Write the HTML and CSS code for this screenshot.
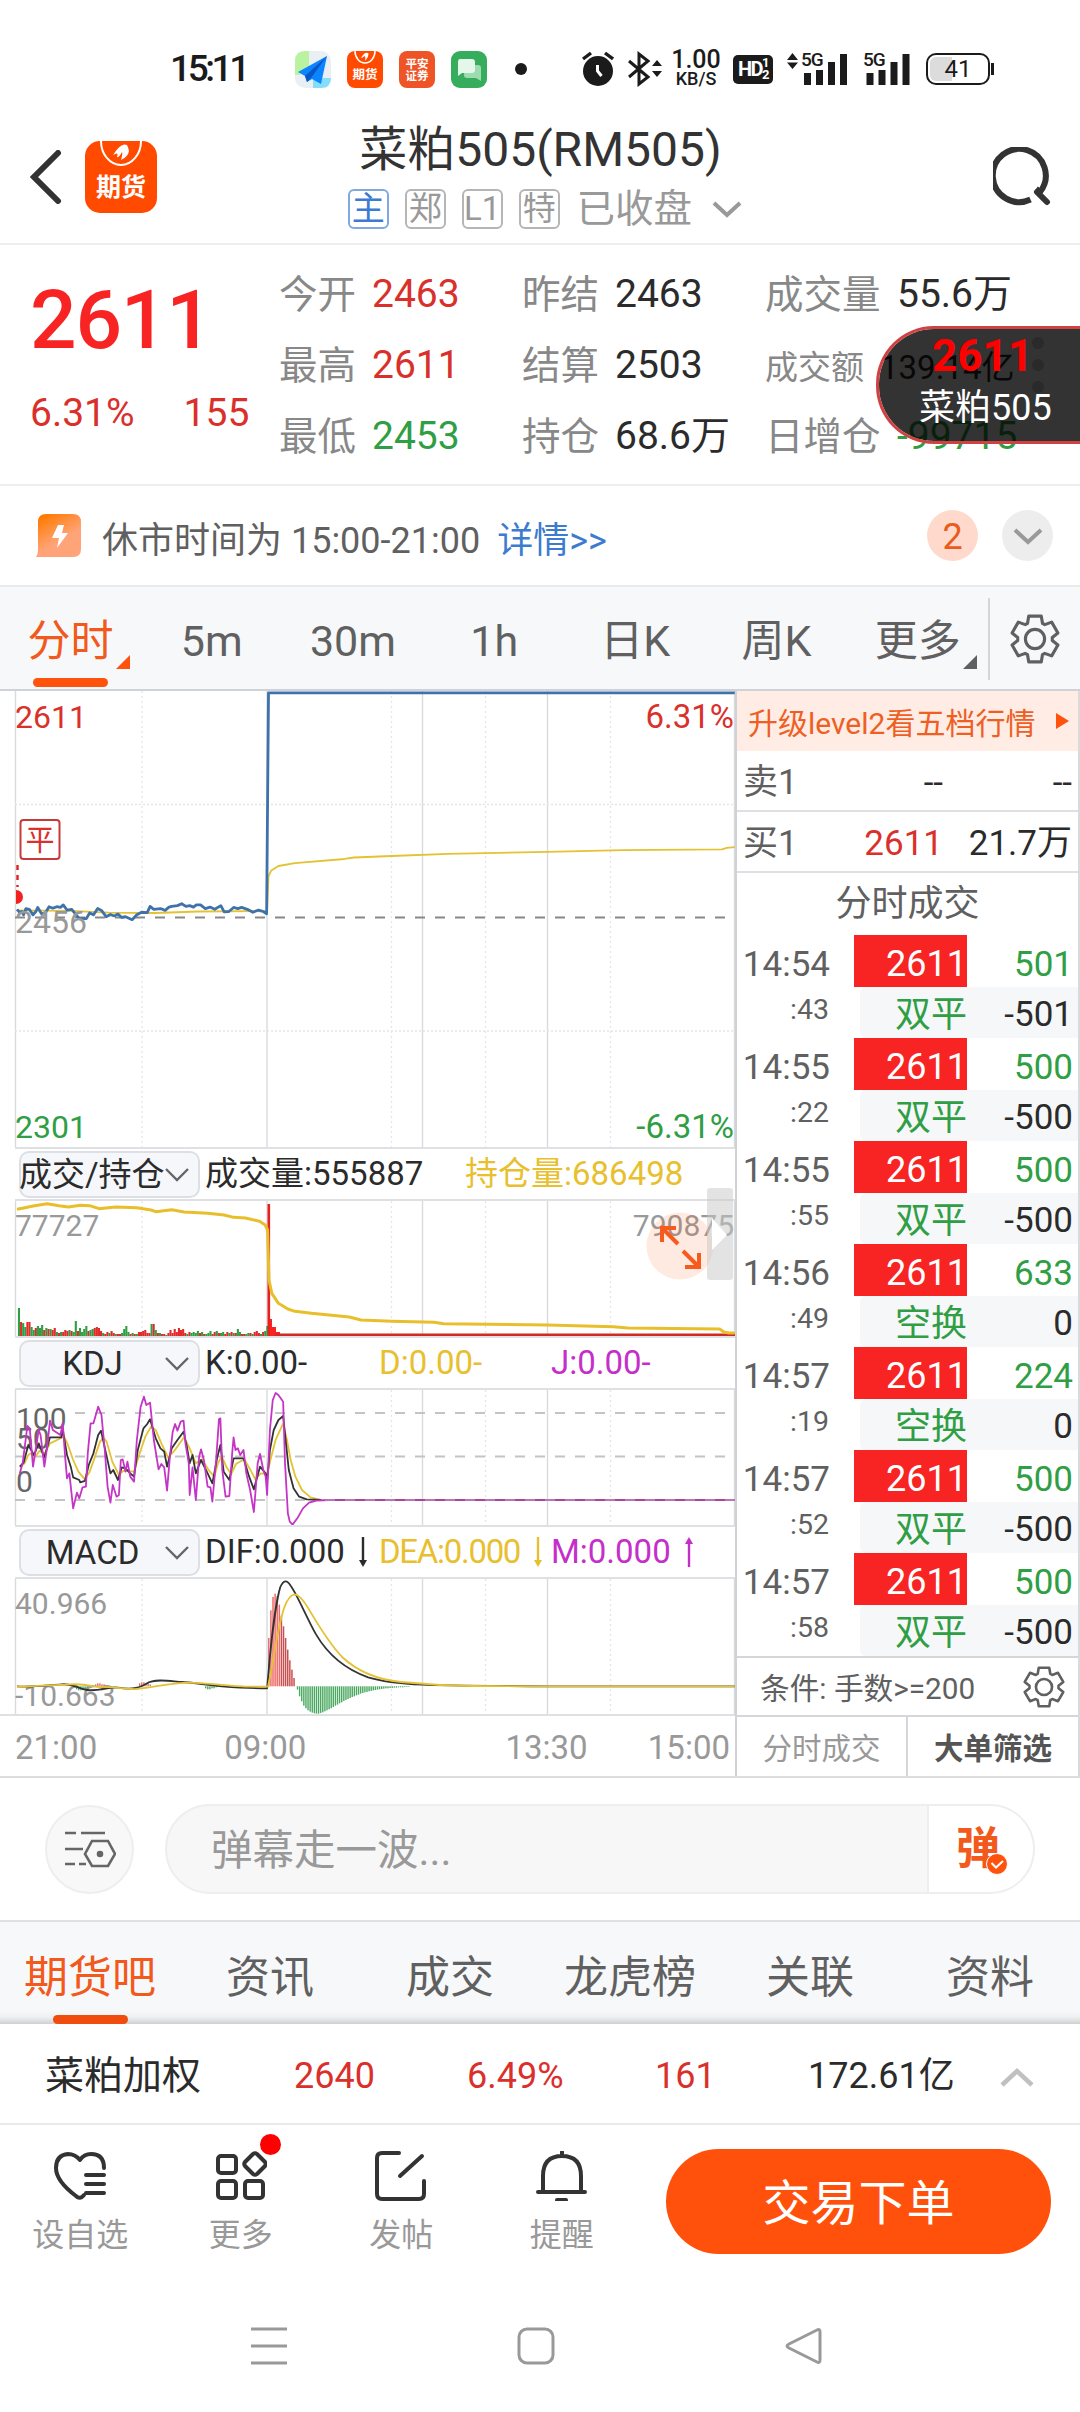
FILE: index.html
```html
<!DOCTYPE html>
<html lang="zh-CN">
<head>
    <meta charset="UTF-8">
    <meta name="viewport" content="width=device-width, initial-scale=1.0">
    <title>菜粕505(RM505)</title>
    <link rel="stylesheet" href="styles.css">
</head>
<body>

    <svg class="defs" width="0" height="0">
        <defs>
            <g id="rejilla">
                <path d="M15.5 0V456M267 0V456M422.5 0V456M547.5 0V456M734.5 0V456" stroke="#d9dadc" stroke-width="1.4"/>
                <path d="M142 0V456M391.5 0V456M485.5 0V456M610.5 0V456" stroke="#e4e5e8" stroke-width="1.3" stroke-dasharray="2 3"/>
            </g>
            <symbol id="gear" viewBox="-12 -12 24 24">
                <path d="M-3-11H3L3.6-7.5 4.7-6.9 8-8.1 11-2.9 8.3-.7V.7L11 2.9 8 8.1 4.7 6.9 3.6 7.5 3 11H-3L-3.6 7.5-4.7 6.9-8 8.1-11 2.9-8.3.7V-.7L-11-2.9-8-8.1-4.7-6.9-3.6-7.5Z" fill="none" stroke="currentColor" stroke-width="1.5" stroke-linejoin="round"/>
                <circle r="4.6" fill="none" stroke="currentColor" stroke-width="1.5"/>
            </symbol>
            <symbol id="chev" viewBox="0 0 30 18">
                <path d="M2 3L15 15 28 3" fill="none" stroke="currentColor" stroke-width="4"/>
            </symbol>
            <symbol id="down" viewBox="0 0 8 30">
                <path d="M4 0V28" stroke="currentColor" stroke-width="2.4"/>
                <path d="M0 23H8L4 30Z" fill="currentColor"/>
            </symbol>
        </defs>
    </svg>

    <!-- Status bar -->
    <div class="status">
        <span class="clock">15:11</span>
        <div class="apps">
            <svg width="36" height="37" viewBox="0 0 36 37"><rect width="36" height="37" rx="10" fill="#e9eff3"/><path d="M0 24V10Q0 0 10 0H14V18L4 24Z" fill="#b9f2a0"/><path d="M18 27H36Q36 37 26 37H18Z" fill="#86dcfb"/><path d="M32 5L3 21 10 25 12 31 17 28 26 33Z" fill="#0a84ff"/><path d="M32 5L10 25 12 31 16 27Z" fill="#0757c4"/></svg>
            <div class="app app-qh"><svg class="arc" viewBox="0 0 72 73"><path d="M16 0A20 24 0 0 0 56 0" fill="none" stroke="#fff" stroke-width="3"/><path d="M28 14Q36 0 43 5Q43 12 36 20Q38 12 35 10Q31 14 28 14Z" fill="#fff"/></svg><b>期货</b></div>
            <div class="app app-pa"><b>平安</b><b>证券</b></div>
            <svg width="36" height="37" viewBox="0 0 36 37"><rect width="36" height="37" rx="9" fill="#35ad5c"/><path d="M14 14H27Q30 14 30 17V30L25 27H16Q13 27 13 24Z" fill="#9ddcb0"/><path d="M9 8H21Q24 8 24 11V19Q24 22 21 22H11L7 25V11Q7 8 9 8Z" fill="#e4f7ea"/></svg>
            <i class="dot"></i>
        </div>
        <div class="sys">
            <svg width="32" height="36" viewBox="0 0 32 36"><circle cx="16" cy="20" r="15" fill="#1b1b1b"/><path d="M1 8L9 2M31 8L23 2" stroke="#1b1b1b" stroke-width="3.4"/><path d="M15.500 14V20L19.500 25" fill="none" stroke="#fff" stroke-width="3"/></svg>
            <svg class="bt" width="34" height="36" viewBox="0 0 34 36"><path d="M1 10L20 26 11 33V3L20 10 1 26" fill="none" stroke="#1b1b1b" stroke-width="3"/><path d="M24 15L29 9 34 15ZM24 20L29 26 34 20Z" fill="#1b1b1b"/></svg>
            <div class="speed"><b>1.00</b><span>KB/S</span></div>
            <div class="hd"><b>HD</b><span><b>1</b><b>2</b></span></div>
            <div class="signal">
                <svg width="60" height="34" viewBox="0 0 60 34"><path d="M0 8L5.500 1 11 8ZM0 10.500L5.500 17 11 10.500Z" fill="#1b1b1b"/><path d="M20.500 21V33M32.500 18V33M44.500 10V33M56.500 2V33" stroke="#1b1b1b" stroke-width="7"/></svg>
                <b>5G</b>
            </div>
            <div class="signal second">
                <svg width="47" height="34" viewBox="0 0 47 34"><path d="M7 21V33M19 18V33M31 10V33M43 2V33" stroke="#1b1b1b" stroke-width="7"/></svg>
                <b>5G</b>
            </div>
            <div class="battery"><span>41</span></div>
            <i class="knob"></i>
        </div>
    </div>

    <!-- Header -->
    <header class="header">
        <div class="left">
            <svg width="32" height="54" viewBox="0 0 32 54"><path d="M28 3L4 27 28 51" fill="none" stroke="#333" stroke-width="6" stroke-linecap="round"/></svg>
            <div class="logo"><svg class="arc" viewBox="0 0 72 73"><path d="M16 0A20 24 0 0 0 56 0" fill="none" stroke="#fff" stroke-width="2"/><path d="M28 14Q36 1 42 4Q43 6 44 10Q43 16 36 19Q38 12 37 11Q34 17 32 16Q34 10 28 14Z" fill="#fff"/></svg><b>期货</b></div>
        </div>
        <div class="title">
            <h1>菜粕505(RM505)</h1>
            <div class="tags">
                <span class="tag blue">主</span><span class="tag">郑</span><span class="tag">L1</span><span class="tag">特</span>
                <span class="closed">已收盘</span>
                <svg width="30" height="18"><use href="#chev"/></svg>
            </div>
        </div>
        <svg class="search" width="58" height="60" viewBox="0 0 58 60"><path d="M37.500 52.500A26.500 26.500 0 1 1 47 45L43 42" fill="none" stroke="#333" stroke-width="6" stroke-linecap="butt"/><path d="M44 45L54 55" stroke="#333" stroke-width="6" stroke-linecap="round"/></svg>
    </header>

    <!-- Quote summary -->
    <section class="quote">
        <div class="price">
            <div class="last">2611</div>
            <div class="change"><span>6.31%</span><span>155</span></div>
        </div>
        <div class="stats">
            <div><label>今开</label><span class="red">2463</span></div>
            <div><label>昨结</label><span>2463</span></div>
            <div class="wide"><label>成交量</label><span>55.6万</span></div>
            <div><label>最高</label><span class="red">2611</span></div>
            <div><label>结算</label><span>2503</span></div>
            <div class="wide small"><label>成交额</label><span>139.14亿</span></div>
            <div><label>最低</label><span class="green">2453</span></div>
            <div><label>持仓</label><span>68.6万</span></div>
            <div class="wide"><label>日增仓</label><span class="green">-99715</span></div>
        </div>
        <div class="floating">
            <b>2611</b>
            <span>菜粕505</span>
            <svg width="14" height="60" viewBox="0 0 14 60"><circle cx="7" cy="8" r="6"/><circle cx="7" cy="30" r="6"/><circle cx="7" cy="52" r="6"/></svg>
        </div>
    </section>

    <!-- Notice -->
    <div class="notice">
        <svg width="46" height="44" viewBox="0 0 46 44"><defs><linearGradient id="g1" x1="0" y1="0" x2=".6" y2="1"><stop offset=".1" stop-color="#ff7a00"/><stop offset=".7" stop-color="#ffa478"/></linearGradient></defs><path d="M2 8Q2 0 10 0H37Q45 0 45 8V35Q45 43 37 43H0Q2 40 2 36Z" fill="url(#g1)"/><path d="M22 11H28L26 19H32L21 34 23 24H16Z" fill="#fff"/></svg>
        <span>休市时间为 15:00-21:00</span>
        <a>详情&gt;&gt;</a>
        <i class="count">2</i>
        <i class="fold"><svg width="30" height="18"><use href="#chev"/></svg></i>
    </div>

    <!-- Period tabs -->
    <nav class="periods">
        <div class="on"><span>分时</span><svg class="corner" width="14" height="14"><path d="M14 0V14H0Z"/></svg></div>
        <div><span>5m</span></div>
        <div><span>30m</span></div>
        <div><span>1h</span></div>
        <div><span>日K</span></div>
        <div><span>周K</span></div>
        <div><span>更多</span><svg class="corner" width="14" height="14"><path d="M14 0V14H0Z"/></svg></div>
        <div class="set"><svg width="50" height="50"><use href="#gear"/></svg></div>
    </nav>

    <main class="market">
        <div class="charts">
            <!-- Price -->
            <svg class="plot" width="735" height="456" viewBox="0 0 735 456">
                <use href="#rejilla"/>
                <path d="M15 113.500H735M15 340H735" stroke="#e4e5e8" stroke-width="1.3" stroke-dasharray="2 2"/>
                <path d="M15 226.500H735" stroke="#888" stroke-width="2" stroke-dasharray="10 10"/>
                <g transform="scale(.4719 .37) translate(0 -300)" fill="none">
                    <path class="ln yellow" d="M36 893L150 894 230 899 330 900 420 896 540 895 566 896 569 800 575 785 590 773 625 765 730 754 750 750 830 746 950 740 1160 735 1320 730 1530 728 1540 724 1557 722"/>
                    <path class="ln blue" d="M36 890L42 899 46 896 50 905 55 888 62 890 70 905 76 896 80 885 88 902 96 900 104 883 112 887 120 883 128 885 134 878 142 892 152 890 160 903 168 915 183 915 190 900 198 905 207 888 215 893 225 910 234 904 242 908 250 903 258 912 266 910 280 918 290 905 300 898 312 899 318 882 326 890 340 888 350 893 358 884 364 882 376 880 385 875 394 882 402 880 410 884 416 878 425 878 435 888 445 884 455 890 468 880 475 897 485 896 495 885 504 888 512 885 524 890 536 898 548 892 558 896 565 902 569 305H1557"/>
                </g>
                <path d="M17.500 174V196" stroke="#d22" stroke-width="2.400" stroke-dasharray="5 5"/>
                <path d="M15 199A7 7 0 0 1 15 213Z" transform="translate(1 0)" fill="#f22222"/>
                <rect x="20.500" y="129" width="39" height="39" rx="3" fill="#fff" stroke="#c73a3a" stroke-width="2"/>
                <text x="40" y="159.500" font-size="29" text-anchor="middle" class="c-red">平</text>
                <text x="15" y="37" class="c-red">2611</text>
                <text x="734" y="37" font-size="33" text-anchor="end" class="c-red">6.31%</text>
                <text x="15" y="241.500" class="c-gray">2456</text>
                <text x="15" y="447" class="c-green">2301</text>
                <text x="734" y="447" font-size="33" text-anchor="end" class="c-green">-6.31%</text>
            </svg>

            <!-- Volume / open interest -->
            <div class="bar">
                <div class="pick full">成交/持仓<svg width="24" height="14" viewBox="0 0 24 14"><path d="M1 1L12 12 23 1"/></svg></div>
                <span class="v2">成交量:555887</span><span class="c2">持仓量:686498</span>
            </div>
            <div class="plot-wrap">
                <svg class="plot" width="735" height="135" viewBox="0 0 735 135">
                    <use href="#rejilla"/>
                    <text x="15" y="35" font-size="30" class="c-gray">77727</text>
                    <text x="734" y="35" font-size="30" text-anchor="end" class="c-gray">790875</text>
                    <g id="volumen"></g>
                    <path d="M275 134H735" stroke="#cf2b22" stroke-width="3"/>
                    <g transform="scale(.4719 .3333) translate(0 -213)" fill="none">
                        <path class="ln yellow3" d="M36 238L50 234 70 228 100 221 125 227 145 231 170 226 190 227 210 236 245 231 290 233 320 240 330 245 364 239 390 246 440 250 475 255 495 262 520 264 550 274 562 285 567 300 570 450 576 490 590 520 610 537 625 544 660 550 740 561 765 570 830 574 920 577 940 581 1160 585 1300 590 1330 594 1525 597 1534 606 1545 609 1557 609"/>
                    </g>
                    <circle cx="680" cy="45" r="33.500" fill="rgba(255,90,20,.13)"/>
                    <path d="M662 41V27H676M662 27L678 43M683 50L699 66M699 52V66H685" fill="none" stroke="#f75a1c" stroke-width="4"/>
                </svg>
                <svg class="handle" width="26" height="92"><path d="M5 30L20 47 5 62Z" fill="#fff"/></svg>
            </div>

            <!-- KDJ -->
            <div class="bar">
                <div class="pick mid">KDJ<svg width="24" height="14" viewBox="0 0 24 14"><path d="M1 1L12 12 23 1"/></svg></div>
                <span>K:0.00-</span><span class="c2">D:0.00-</span><span class="c3">J:0.00-</span>
            </div>
            <svg class="plot" width="735" height="135" viewBox="0 0 735 135">
                <use href="#rejilla"/>
                <path d="M75 23H735M15 66.500H735M15 110H735" stroke="#c4c4c4" stroke-width="1.800" stroke-dasharray="10 10"/>
                <text x="16" y="39" font-size="30" class="c-dark">100</text>
                <text x="16" y="59" font-size="30" class="c-dark">50</text>
                <text x="16" y="102" font-size="30" class="c-dark">0</text>
                <g transform="scale(.4719 .3333) translate(0 -30)" fill="none">
                    <path class="ln yellow" d="M42 262L52 250 60 225 66 220 74 232 84 212 94 222 106 190 130 174 136 170 144 195 155 240 166 275 180 298 190 275 200 235 212 185 219 173 226 185 238 245 252 285 262 272 284 275 296 220 308 170 320 140 330 150 342 190 356 232 368 215 390 172 402 205 415 250 428 238 442 270 454 290 462 250 470 228 480 262 490 282 500 252 518 238 530 268 541 297 553 280 566 282 574 235 584 180 600 130 608 180 616 240 626 290 640 330 658 352 680 360"/>
                    <path class="ln black" d="M42 260L50 248 60 195 72 225 82 190 94 232 106 172 130 172 133 150 142 225 150 260 155 292 168 300 170 307 180 303 188 255 198 220 208 165 214 152 220 190 234 280 240 270 250 300 258 262 266 265 276 280 284 290 292 210 304 145 312 132 318 118 330 175 340 205 348 215 354 260 364 205 376 180 389 155 396 200 402 250 408 225 415 280 426 240 440 280 450 310 460 235 467 195 474 275 486 300 495 235 516 235 528 290 538 328 551 260 563 280 566 305 572 210 580 150 590 120 600 108 606 190 612 270 622 325 634 350 650 358 680 360"/>
                    <path class="ln purple" d="M42 280L48 250 58 138 63 145 70 260 82 150 86 165 94 260 100 200 106 122 112 150 128 165 133 130 138 230 142 295 147 280 155 385 163 338 168 355 175 322 182 320 186 220 192 130 198 130 208 80 215 105 222 210 228 320 234 368 239 315 247 350 252 345 256 240 260 238 266 275 270 245 276 290 284 305 290 180 298 80 305 50 310 75 318 68 326 180 336 268 342 252 348 262 354 332 360 230 366 155 371 132 376 152 383 125 389 122 393 190 400 250 402 345 408 262 415 360 422 230 426 208 432 240 440 320 446 322 450 365 458 240 464 118 467 115 471 270 478 350 486 348 492 220 495 172 499 210 504 205 509 225 516 210 522 280 530 330 538 396 546 250 551 222 558 270 563 290 566 345 572 150 578 60 584 39 590 45 600 65 604 250 610 400 614 425 620 434 630 415 642 385 655 368 670 362 700 360"/>
                </g>
                <path d="M325 110H735" stroke="#b878b4" stroke-width="2"/>
                <path d="M335 110H735" stroke="#a8469f" stroke-width="2" stroke-dasharray="10 10"/>
            </svg>

            <!-- MACD -->
            <div class="bar">
                <div class="pick mid">MACD<svg width="24" height="14" viewBox="0 0 24 14"><path d="M1 1L12 12 23 1"/></svg></div>
                <span>DIF:0.000<svg width="8" height="30"><use href="#down"/></svg></span><span class="c2 tight">DEA:0.000<svg width="8" height="30"><use href="#down"/></svg></span><span class="c3">M:0.000<svg class="up" width="8" height="30"><use href="#down"/></svg></span>
            </div>
            <svg class="plot" width="735" height="135" viewBox="0 0 735 135">
                <use href="#rejilla"/>
                <text x="15" y="35" font-size="30" class="c-gray">40.966</text>
                <text x="15" y="126.500" font-size="30" class="c-gray">-10.663</text>
                <g id="macd"></g>
                <g transform="scale(.4719 .3333) translate(0 -598)" fill="none">
                    <path class="ln black" d="M36 920C60 924 100 917 130 914S160 926 185 931S230 920 250 924S290 930 310 912S370 907 385 907S450 918 470 920S540 926 566 926L572 830C578 740 588 650 594 622Q604 590 616 618C630 645 650 715 670 765C695 825 730 868 780 893C810 906 850 912 895 915S1000 918 1160 920H1557"/>
                    <path class="ln yellow" d="M36 922C60 920 110 916 150 914S200 924 215 922S270 930 290 928S370 909 400 909S500 921 520 921H568L574 880C582 810 594 720 602 685Q612 646 624 644Q636 644 655 690C680 750 700 795 725 832C755 872 800 900 850 907S950 918 1000 919S1100 920 1160 920H1557"/>
                </g>
            </svg>
            <div class="axis"><span>21:00</span><span>09:00</span><span>13:30</span><span>15:00</span></div>
        </div>

        <!-- Order book -->
        <aside class="book">
            <div class="upgrade"><span>升级level2看五档行情</span><svg width="13" height="16"><path d="M0 0L13 8 0 16Z" fill="#ff520d"/></svg></div>
            <div class="level"><label>卖1</label><span>--</span><span>--</span></div>
            <div class="level"><label>买1</label><span class="red">2611</span><span>21.7万</span></div>
            <div class="book-title">分时成交</div>
            <div class="ticks" id="ticks"></div>
            <div class="cond"><span>条件: 手数&gt;=200</span><svg width="42" height="42"><use href="#gear"/></svg></div>
            <div class="book-tabs"><span>分时成交</span><b>大单筛选</b></div>
        </aside>
    </main>

    <!-- Bullet comments -->
    <div class="danmu">
        <div class="danmu-set"><svg width="52" height="38" viewBox="0 0 52 38" fill="none" stroke="#666" stroke-width="2.600"><path d="M1 3H12M17 3H41M1 19H19M1 34H11M15 34H22"/><path d="M28 11H44L51 24 44 36H28L21 24Z"/><circle cx="36" cy="24" r="2" fill="#666"/></svg></div>
        <div class="danmu-input">
            <span>弹幕走一波...</span>
            <div class="danmu-on"><b>弹</b><svg width="22" height="22" viewBox="0 0 22 22"><circle cx="11" cy="11" r="10.500" fill="#ff520d" stroke="#fff"/><path d="M5.500 10L10 14.500 17 8" fill="none" stroke="#fff" stroke-width="2"/></svg></div>
        </div>
    </div>

    <nav class="sections">
        <div class="on">期货吧</div><div>资讯</div><div>成交</div><div>龙虎榜</div><div>关联</div><div>资料</div>
    </nav>

    <div class="index-row">
        <span class="name">菜粕加权</span>
        <span class="red">2640</span>
        <span class="red">6.49%</span>
        <span class="red">161</span>
        <span>172.61亿</span>
        <svg width="34" height="20" viewBox="0 0 34 20"><path d="M2 18L17 4 32 18" fill="none" stroke="#c0c0c0" stroke-width="4.500"/></svg>
    </div>

    <footer class="actions">
        <div class="action"><svg width="52" height="50" viewBox="0 0 52 50"><path d="M50 17Q50 3 37 3Q30 3 26 9Q21 3 14 3Q2 4 2 17Q2 30 22 45Q26 49 30 44" /><path d="M32 24H50M32 33H50M32 42H50"/></svg>设自选</div>
        <div class="action"><svg width="52" height="50" viewBox="0 0 52 50"><rect x="3" y="5" width="18" height="17" rx="3"/><rect x="3" y="30" width="18" height="17" rx="3"/><rect x="30" y="30" width="18" height="17" rx="3"/><path d="M38 3Q40 1.500 42 3L50 11Q51.500 13 50 15L42 23Q40 24.500 38 23L30 15Q28.500 13 30 11Z"/></svg><i class="red-dot"></i>更多</div>
        <div class="action"><svg width="52" height="50" viewBox="0 0 52 50"><path d="M24 2H7Q2 2 2 7V43Q2 48 7 48H44Q49 48 49 43V30M25 25L47 5"/></svg>发帖</div>
        <div class="action"><svg width="52" height="50" viewBox="0 0 52 50"><path d="M7 41V25Q7 5 26 5Q45 5 45 25V41M2 41H49M26 5V1M21 49H30"/></svg>提醒</div>
        <button class="order">交易下单</button>
    </footer>

    <div class="sysnav">
        <svg width="36" height="38" viewBox="0 0 36 38"><path d="M0 2H36M0 19H36M0 36H36"/></svg>
        <svg width="38" height="38" viewBox="0 0 38 38"><rect x="2" y="2" width="34" height="34" rx="8"/></svg>
        <svg width="38" height="38" viewBox="0 0 38 38"><path d="M32 3Q35 1.500 35 5V33Q35 36.500 32 35L4 21Q0 19 4 17Z"/></svg>
    </div>

    <script src="charts.js"></script>
</body>
</html>
```

FILE: styles.css
```css
* {
    box-sizing: border-box;
}
body {
    margin: 0;
    width: 1080px;
    height: 2412px;
    overflow: hidden;
    background: #fff;
    color: #2b2b2b;
    font-family: Roboto, "Noto Sans CJK SC", sans-serif;
}
svg {
    display: block;
    flex: none;
}
i {
    font-style: normal;
}
.defs {
    position: absolute;
}
.red { color: #d9302c; }
.green { color: #2f9e44; }

/* Status bar */
.status {
    display: flex;
    align-items: flex-start;
    height: 100px;
    padding: 39px 0 0 170px;
    color: #1b1b1b;
}
.clock {
    width: 125px;
    font-size: 37px;
    font-weight: 500;
    line-height: 60px;
    letter-spacing: -3.4px;
}
.apps {
    display: flex;
    align-items: center;
    gap: 16px;
    width: 287px;
    height: 60px;
}
.app {
    position: relative;
    width: 36px;
    height: 37px;
    border-radius: 8px;
    color: #fff;
    text-align: center;
    overflow: hidden;
}
.arc {
    position: absolute;
    left: 0;
    top: 0;
    width: 100%;
}
.app-qh {
    background: #ff4a00;
}
.app-qh b {
    display: block;
    padding-top: 16px;
    font-size: 12.5px;
    line-height: 16px;
}
.app-pa {
    background: #ee5426;
    padding-top: 7px;
}
.app-pa b {
    display: block;
    font-size: 11.5px;
    line-height: 12px;
}
.dot {
    width: 12px;
    height: 12px;
    margin-left: 12px;
    border-radius: 50%;
    background: #1b1b1b;
}
.sys {
    display: flex;
    align-items: center;
    height: 60px;
}
.bt {
    margin-left: 14px;
}
.speed {
    width: 50px;
    margin-left: 9px;
    text-align: center;
}
.speed b {
    display: block;
    font-size: 25px;
    font-weight: 500;
    line-height: 20px;
}
.speed span {
    display: block;
    font-size: 18px;
    font-weight: 500;
    line-height: 18px;
}
.hd {
    display: flex;
    align-items: center;
    justify-content: center;
    width: 40px;
    height: 29px;
    margin-left: 12px;
    border-radius: 5px;
    background: #1b1b1b;
    color: #fff;
    font-size: 20px;
    letter-spacing: -1.5px;
}
.hd span b {
    display: block;
    font-size: 13px;
    line-height: 12px;
}
.signal {
    position: relative;
    margin-left: 14px;
}
.signal b {
    position: absolute;
    left: 14px;
    top: -2px;
    font-size: 19px;
    font-weight: 500;
    line-height: 20px;
    letter-spacing: -1px;
    background: #fff;
    height: 17px;
}
.signal.second {
    margin-left: 16px;
}
.signal.second b {
    left: 0;
}
.battery {
    width: 64px;
    height: 32px;
    margin-left: 16px;
    border: 2.5px solid #1b1b1b;
    border-radius: 10px;
    background: linear-gradient(90deg, #dcdcdc 24px, #fff 24px);
    background-clip: content-box;
    padding: 2px;
    font-size: 24px;
    line-height: 24px;
    text-align: center;
}
.knob {
    width: 3px;
    height: 12px;
    margin-left: 1px;
    background: #1b1b1b;
}

/* Header */
.header {
    display: flex;
    justify-content: space-between;
    height: 145px;
    padding: 22px 29px 0 30px;
    border-bottom: 2px solid #eee;
}
.left {
    display: flex;
    align-items: center;
    gap: 23px;
    width: 130px;
    height: 110px;
}
.logo {
    position: relative;
    width: 72px;
    height: 72px;
    border-radius: 15px;
    background: #ff4a00;
    color: #fff;
    text-align: center;
}
.logo b {
    display: block;
    padding-top: 32px;
    font-size: 25px;
    line-height: 30px;
}
.title {
    width: 440px;
}
h1 {
    margin: 0 0 11px;
    color: #333;
    font-size: 48px;
    font-weight: 400;
    line-height: 56px;
    text-align: center;
    white-space: nowrap;
}
.tags {
    display: flex;
    align-items: center;
    gap: 15.500px;
    height: 40px;
    padding-left: 27px;
    color: #999;
}
.tag {
    width: 41.500px;
    height: 40px;
    border: 2px solid #b5b5b5;
    border-radius: 6px;
    font-size: 33px;
    line-height: 36px;
    text-align: center;
}
.tag.blue {
    border-color: #7fa9e0;
    color: #3c7bd0;
}
.closed {
    margin-left: 1px;
    font-size: 38.500px;
    line-height: 40px;
}
.tags svg {
    margin-left: 4px;
}
.search {
    margin-top: 25px;
    margin-left: 72px;
}

/* Quote */
.quote {
    position: relative;
    display: flex;
    height: 241px;
    padding-top: 14px;
    border-bottom: 2px solid #eee;
}
.price {
    width: 279px;
    padding: 19px 0 0 30px;
}
.last {
    color: #f82424;
    font-size: 82px;
    font-weight: 500;
    line-height: 84px;
    letter-spacing: -1.2px;
}
.change {
    display: flex;
    gap: 49px;
    margin-top: 29px;
    color: #d9302c;
    font-size: 39px;
    line-height: 44px;
}
.stats {
    display: grid;
    grid-template-columns: 243px 243px 1fr;
    grid-auto-rows: 71px;
    flex: 1;
    font-size: 39px;
    line-height: 71px;
    white-space: nowrap;
}
.stats > div {
    display: flex;
}
.stats label {
    width: 93px;
    color: #888;
    font-size: 38.500px;
}
.stats .wide label {
    width: 132px;
}
.stats .small {
    font-size: 33px;
    padding-top: 2px;
}
.stats .small label {
    width: 115px;
    font-size: 33px;
}
.floating {
    position: absolute;
    right: 0;
    top: 81px;
    width: 204px;
    height: 118px;
    border: 3px solid #d04242;
    border-right: 0;
    border-radius: 58px 0 0 58px;
    background: rgba(0, 0, 0, .8);
    background-clip: padding-box;
    color: #fff;
}
.floating b {
    position: relative;
    z-index: 1;
    display: block;
    padding-left: 53px;
    color: #f00;
    font-size: 44px;
    line-height: 54px;
}
.floating span {
    display: block;
    padding-left: 40px;
    font-size: 36px;
    line-height: 50px;
}
.floating svg {
    position: absolute;
    left: 152px;
    top: 6px;
    fill: #2a2a2a;
}

/* Notice */
.notice {
    display: flex;
    align-items: center;
    height: 101px;
    padding: 0 27px 0 36px;
    border-bottom: 2px solid #e8eaec;
    color: #606060;
    font-size: 36px;
}
.notice span {
    margin-left: 20px;
    padding-top: 3px;
}
.notice a {
    margin-left: 17px;
    padding-top: 3px;
    color: #3c7bd0;
}
.notice i {
    display: flex;
    align-items: center;
    justify-content: center;
    width: 51px;
    height: 51px;
    border-radius: 50%;
}
.notice .count {
    margin-left: auto;
    padding-top: 2px;
    background: #ffdacc;
    color: #e85c20;
}
.notice .fold {
    margin-left: 24px;
    background: #ededed;
    color: #999;
}

/* Period tabs */
.periods {
    display: flex;
    height: 104px;
    border-bottom: 2px solid #cfd3d8;
    background: #f7f8fa;
    color: #606060;
    font-size: 43px;
    line-height: 108px;
}
.periods > div {
    position: relative;
    width: 141.200px;
    text-align: center;
}
.periods > .set {
    display: flex;
    align-items: center;
    justify-content: center;
    flex: 1;
    height: 82px;
    margin-top: 11px;
    border-left: 2px solid #d4d6d9;
}
.corner {
    position: absolute;
    right: 11px;
    top: 68px;
    fill: #606060;
}
.periods .on {
    color: #f2591c;
}
.periods .on .corner {
    fill: #ff520d;
}
.periods .on::after {
    content: "";
    position: absolute;
    left: 33px;
    top: 91px;
    width: 75px;
    height: 9px;
    border-radius: 5px;
    background: #ff520d;
}

/* Charts */
.market {
    display: flex;
    height: 1087px;
    border-bottom: 2px solid #ddd;
}
.charts {
    width: 735px;
}
.plot {
    overflow: hidden;
    font-size: 32px;
}
.plot-wrap {
    position: relative;
}
.handle {
    position: absolute;
    left: 707px;
    top: -13px;
    border-radius: 3px;
    background: rgba(200, 200, 200, .5);
}
.ln {
    stroke-width: 1.8;
    stroke-linejoin: round;
    vector-effect: non-scaling-stroke;
}
.yellow { stroke: #e3c234; }
.yellow3 { stroke: #e8bf2b; stroke-width: 3; }
.blue { stroke: #3f72ab; stroke-width: 2.8; }
.black { stroke: #333; }
.purple { stroke: #c535c5; }
.c-red { fill: #d9302c; }
.c-green { fill: #2f9e44; }
.c-gray { fill: #999; }
.c-dark { fill: #666; }
.bar {
    display: grid;
    grid-template-columns: 186px 174px 172px 1fr;
    align-items: center;
    height: 54px;
    margin-left: 15px;
    padding-left: 4px;
    border-top: 2px solid #dfe0e3;
    border-bottom: 2px solid #dfe0e3;
    color: #2b2b2b;
    font-size: 33px;
    line-height: 50px;
    white-space: nowrap;
}
.bar .v2 {
    margin-right: -86px;
}
.bar .v2 + .c2 {
    margin-left: 86px;
}
.bar span {
    display: flex;
    align-items: center;
}
.bar span svg {
    margin-left: 14px;
}
.bar .c2 { color: #e8c02f; }
.bar .c3 { color: #c52fc9; }
.bar .tight { letter-spacing: -1.3px; }
.up {
    transform: rotate(180deg);
}
.pick {
    position: relative;
    width: 181px;
    height: 47px;
    border: 2px solid #dcdfe3;
    border-radius: 10px;
    background: #f6f7fa;
    line-height: 44px;
}
.pick.full {
    text-indent: -2px;
}
.pick.mid {
    padding-right: 34px;
    text-align: center;
}
.pick svg {
    position: absolute;
    right: 9px;
    top: 15px;
    fill: none;
    stroke: #666;
    stroke-width: 2.4;
}
.axis {
    display: flex;
    height: 61px;
    padding-left: 15px;
    border-top: 2px solid #dfe0e3;
    color: #999;
    font-size: 33px;
    line-height: 63px;
}
.axis span:nth-child(2) { margin-left: 127px; }
.axis span:nth-child(3) { margin-left: 199px; }
.axis span:nth-child(4) { margin-left: auto; margin-right: 5px; }

/* Order book */
.book {
    flex: 1;
    border-left: 2px solid #d0d2d6;
    border-right: 2px solid #d8dadd;
    font-size: 35px;
}
.upgrade {
    display: flex;
    align-items: center;
    justify-content: space-between;
    height: 60px;
    padding: 0 9px 0 11px;
    background: #ffece4;
    color: #ee5f24;
    font-size: 30px;
}
.level {
    display: flex;
    height: 61px;
    padding: 0 6px 0 6px;
    border-bottom: 2px solid #dfe0e3;
    line-height: 64px;
}
.level label {
    width: 102px;
    color: #606060;
}
.level span {
    width: 98px;
    text-align: right;
}
.level span:last-child {
    flex: 1;
}
.book-title {
    height: 62px;
    color: #606060;
    font-size: 36px;
    line-height: 62px;
    text-align: center;
}
.tick {
    display: grid;
    grid-template-columns: 95px 135px 1fr;
    grid-template-rows: 52px 51px;
    line-height: 59px;
    text-align: right;
}
.tick .time {
    padding-right: 2px;
    color: #606060;
}
.tick .sec {
    padding-right: 3px;
    color: #606060;
    font-size: 28.500px;
    line-height: 46px;
}
.tick .px {
    margin-left: 22px;
    background: #f82424;
    color: #fff;
    font-size: 36px;
}
.tick .vol {
    padding-right: 5px;
    color: #2f9e44;
}
.tick .kind {
    margin-left: 28px;
    border-radius: 6px 0 0 6px;
    background: #f6f7f9;
    color: #2f9e44;
    font-size: 36px;
    line-height: 56px;
}
.tick .diff {
    padding-right: 5px;
    background: #f6f7f9;
    line-height: 56px;
}
.cond {
    display: flex;
    align-items: center;
    justify-content: space-between;
    height: 59px;
    padding: 0 13px 0 23px;
    border-top: 2px solid #d4d6d9;
    color: #606060;
    font-size: 29.700px;
}
.book-tabs {
    display: flex;
    height: 61px;
    border-top: 2px solid #d4d6d9;
    font-size: 29.500px;
    line-height: 64px;
    text-align: center;
}
.book-tabs span {
    width: 171px;
    border-right: 2px solid #d4d6d9;
    color: #999;
}
.book-tabs b {
    flex: 1;
    color: #555;
}

/* Bullet comments */
.danmu {
    display: flex;
    align-items: center;
    height: 144px;
    padding: 0 45px 0 45px;
    border-bottom: 2px solid #dfe0e3;
}
.danmu-set {
    display: flex;
    align-items: center;
    justify-content: center;
    width: 89px;
    height: 89px;
    border: 2px solid #eee;
    border-radius: 50%;
    background: #f8f8f8;
}
.danmu-input {
    display: flex;
    flex: 1;
    justify-content: space-between;
    height: 90px;
    margin-left: 31px;
    padding-left: 44px;
    border: 2px solid #eee;
    border-radius: 45px;
    background: #f7f7f7;
    color: #999;
    font-size: 41.500px;
    line-height: 90px;
    overflow: hidden;
}
.danmu-on {
    position: relative;
    width: 106px;
    padding-left: 27px;
    border-left: 2px solid #eee;
    background: #fff;
    color: #f2591c;
    font-size: 44px;
    line-height: 86px;
}
.danmu-on svg {
    position: absolute;
    left: 57px;
    top: 47px;
}

.sections {
    display: flex;
    height: 102px;
    background: linear-gradient(#f7f8fa 88px, #eff0f2 95px, #cfd0d2 102px);
    color: #606060;
    font-size: 44px;
    line-height: 112px;
}
.sections div {
    position: relative;
    width: 180px;
    text-align: center;
}
.sections .on {
    color: #f2591c;
}
.sections .on::after {
    content: "";
    position: absolute;
    left: 53px;
    bottom: 0;
    width: 75px;
    height: 9px;
    border-radius: 5px;
    background: #f04c0e;
}

.index-row {
    display: grid;
    grid-template-columns: 249px 173px 188px 153px 192px 34px;
    align-items: center;
    height: 101px;
    padding-left: 45px;
    border-bottom: 2px solid #eaeaea;
    font-size: 36px;
    line-height: 105px;
}
.index-row .name {
    font-size: 39px;
}

.actions {
    display: flex;
    height: 155px;
    padding: 24px 0 0 0;
}
.action {
    position: relative;
    display: flex;
    flex-direction: column;
    align-items: center;
    width: 160.500px;
    color: #999;
    font-size: 32px;
    line-height: 48px;
}
.action svg {
    margin-top: 2px;
    margin-bottom: 10px;
    fill: none;
    stroke: #333;
    stroke-width: 4;
    stroke-linecap: round;
    stroke-linejoin: round;
}
.red-dot {
    position: absolute;
    left: 99px;
    top: -15px;
    width: 21px;
    height: 21px;
    border-radius: 50%;
    background: #f00;
}
.order {
    width: 385px;
    height: 105px;
    margin-left: 24px;
    padding: 0;
    border: 0;
    border-radius: 53px;
    background: #ff510c;
    color: #fff;
    font: 48px Roboto, "Noto Sans CJK SC", sans-serif;
    line-height: 110px;
}

.sysnav {
    display: flex;
    gap: 230px;
    padding: 47px 0 0 251px;
}
.sysnav svg {
    fill: none;
    stroke: #999;
    stroke-width: 3;
}
```

FILE: charts.js
```js
const SX = 0.4719;

// Volumen por minuto: negativo = verde, positivo = rojo
const volumen = [-28, 14, -13, -9, 14, 14, -9, -6, 8, -10, -8, -11, 6, -8, 7, -7, 6, 8, -4, 3, -4, 4, 6, 5, -6, 5, -4, -15, 5, -8, -4, -7, -10, 5, -6, -7, 8, 9, 8, 5, -3, 2, 4, -3, 5, 3, -2, 2, 2, -3, -7, -10, -4, 2, -3, 2, -2, 4, 4, 5, 6, 3, 3, -12, 12, -6, 3, -3, 2, 2, -1, 3, 6, 3, 7, 4, 8, 6, 7, 3, -2, 4, -3, -4, -3, -5, 3, -4, 2, -2, -3, -5, 2, 4, -5, 3, -3, -4, 2, 4, -3, 4, -3, 3, -7, -4, 2, 2, -2, -3, 3, -2, 4, 5, 3, -2, 4, -5, -10];

// Histograma MACD
const rojo = [145, 228, 268, 278, 270, 245, 212, 180, 145, 110, 78, 50, 25];
const verde = [10, 30, 45, 58, 66, 72, 76, 79, 81, 82, 82, 80, 78, 75, 72, 69, 66, 62, 58, 55, 51, 48, 44, 41, 38, 35, 32, 30, 27, 25, 22, 20, 18, 17, 15, 14, 12, 11, 10, 9, 8, 7, 6, 6, 5, 5, 4, 4, 3, 3, 3, 2, 2, 2];

function barra(x, y, w, h, color) {
    return `<rect x="${x}" y="${y}" width="${w}" height="${h}" fill="${color}"/>`;
}

let html = '';
volumen.forEach((v, i) => {
    const h = Math.abs(v);
    html += barra((38 + i * 4.46) * SX, 135 - h, 2.1, h, v < 0 ? '#2f9e44' : '#e02b2b');
});
html += barra(267.5, 3, 2.6, 132, '#e8211d');
html += barra(270, 118, 2, 17, '#f82424') + barra(272, 126, 4, 9, '#f82424') + barra(276, 131, 4, 4, '#f82424');
document.getElementById('volumen').innerHTML = html;

html = '';
rojo.forEach((v, i) => {
    html += barra((568 + i * 4.46) * SX, 107.3 - v / 3, 1.5, v / 3, i < 6 ? '#ee6b6b' : '#c95050');
});
verde.forEach((v, i) => {
    html += barra((629 + i * 4.46) * SX, 107.3, 1.4, v / 3, '#4aa860');
});
[3, 4, 4, 3, 3, 2].forEach((v, i) => {
    html += barra(76 + i * 2.1, 107.3, 1.4, v, '#4aa860');
    html += barra(95 + i * 2.1, 107.3 - v + 1, 1.4, v - 1, '#e07070');
    html += barra(139 + i * 2.1, 107.3 - v, 1.4, v, '#e07070');
    html += barra(205 + i * 2.1, 107.3, 1.4, v - 1, '#4aa860');
});
document.getElementById('macd').innerHTML = html;

// Detalle de operaciones
const ticks = [
    ['14:54', ':43', '501', '双平', '-501'],
    ['14:55', ':22', '500', '双平', '-500'],
    ['14:55', ':55', '500', '双平', '-500'],
    ['14:56', ':49', '633', '空换', '0'],
    ['14:57', ':19', '224', '空换', '0'],
    ['14:57', ':52', '500', '双平', '-500'],
    ['14:57', ':58', '500', '双平', '-500']
];
document.getElementById('ticks').innerHTML = ticks.map(t => `
    <div class="tick">
        <span class="time">${t[0]}</span><span class="px">2611</span><span class="vol">${t[2]}</span>
        <span class="sec">${t[1]}</span><span class="kind">${t[3]}</span><span class="diff">${t[4]}</span>
    </div>`).join('');
```
